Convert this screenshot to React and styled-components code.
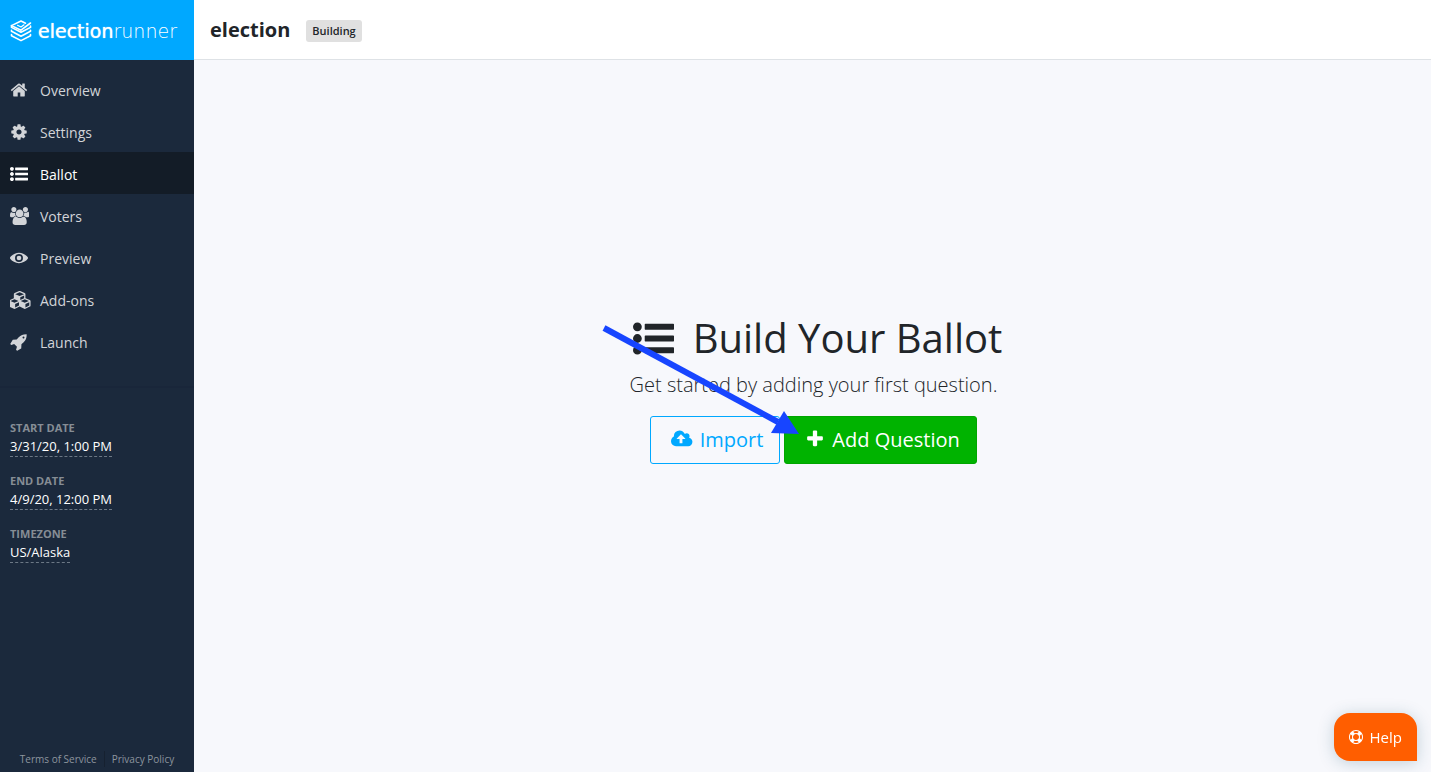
import React from 'react'
import styled, { createGlobalStyle } from 'styled-components'

// [viewBox width, path], all icons are 1792 units high
const icons = {
    home: [1792, 'M1472 992v480q0 26-19 45t-45 19h-384v-384h-256v384h-384q-26 0-45-19t-19-45v-480q0-1 .5-3t.5-3l575-474 575 474q1 2 1 6zm223-69l-62 74q-8 9-21 11h-3q-13 0-21-7l-692-577-692 577q-12 8-24 7-13-2-21-11l-62-74q-8-10-7-23.5t11-21.5l719-599q32-26 76-26t76 26l244 204v-195q0-14 9-23t23-9h192q14 0 23 9t9 23v408l219 182q10 8 11 21.5t-7 23.5z'],
    cog: [1792, 'M1152 896q0-106-75-181t-181-75-181 75-75 181 75 181 181 75 181-75 75-181zm512-109v222q0 12-8 23t-20 13l-185 28q-19 54-39 91 35 50 107 138 10 12 10 25t-9 23q-27 37-99 108t-94 71q-12 0-26-9l-138-108q-44 23-91 38-16 136-29 186-7 28-36 28h-222q-14 0-24.5-8.5t-11.5-21.500l-28-184q-49-16-90-37l-141 107q-10 9-25 9-14 0-25-11-126-114-165-168-7-10-7-23 0-12 8-23 15-21 51-66.500t54-70.500q-27-50-41-99l-183-27q-13-2-21-12.500t-8-23.500v-222q0-12 8-23t19-13l186-28q14-46 39-92-40-57-107-138-10-12-10-24 0-10 9-23 26-36 98.500-107.500t94.500-71.500q13 0 26 10l138 107q44-23 91-38 16-136 29-186 7-28 36-28h222q14 0 24.500 8.500t11.500 21.500l28 184q49 16 90 37l142-107q9-9 24-9 13 0 25 10 129 119 165 170 7 8 7 22 0 12-8 23-15 21-51 66.500t-54 70.500q26 50 41 98l183 28q13 2 21 12.500t8 23.500z'],
    list: [1792, 'M384 1408q0 80-56 136t-136 56-136-56-56-136 56-136 136-56 136 56 56 136zm0-512q0 80-56 136t-136 56-136-56-56-136 56-136 136-56 136 56 56 136zm1408 416v192q0 13-9.500 22.500t-22.500 9.500h-1216q-13 0-22.500-9.500t-9.500-22.500v-192q0-13 9.500-22.500t22.500-9.500h1216q13 0 22.500 9.500t9.500 22.500zm-1408-928q0 80-56 136t-136 56-136-56-56-136 56-136 136-56 136 56 56 136zm1408 416v192q0 13-9.500 22.500t-22.500 9.500h-1216q-13 0-22.500-9.500t-9.500-22.500v-192q0-13 9.500-22.500t22.500-9.500h1216q13 0 22.500 9.500t9.500 22.500zm0-512v192q0 13-9.500 22.500t-22.500 9.500h-1216q-13 0-22.500-9.500t-9.500-22.500v-192q0-13 9.500-22.500t22.500-9.500h1216q13 0 22.500 9.500t9.500 22.500z'],
    users: [1920, 'M593 896q-162 5-265 128h-134q-82 0-138-40.500t-56-118.500q0-353 124-353 6 0 43.500 21t97.500 42.500 119 21.500q67 0 133-23-5 37-5 66 0 159 93 293zm1071 637q0 120-73 189.500t-194 69.500h-874q-121 0-194-69.500t-73-189.500q0-53 3.500-103.500t14-109 26.500-108.500 43-97.500 62-81 85.500-53.500 111.500-20q10 0 43 21.500t73 48 107 48 135 21.500 135-21.500 107-48 73-48 43-21.500q61 0 111.500 20t85.500 53.500 62 81 43 97.500 26.500 108.500 14 109 3.500 103.500zm-1024-1277q0 106-75 181t-181 75-181-75-75-181 75-181 181-75 181 75 75 181zm704 384q0 159-112.500 271.500t-271.500 112.500-271.500-112.500-112.500-271.500 112.500-271.500 271.500-112.500 271.500 112.500 112.500 271.500zm576 225q0 78-56 118.500t-138 40.500h-134q-103-123-265-128 93-134 93-293 0-29-5-66 66 23 133 23 59 0 119-21.500t97.500-42.500 43.500-21q124 0 124 353zm-128-609q0 106-75 181t-181 75-181-75-75-181 75-181 181-75 181 75 75 181z'],
    eye: [1792, 'M896 384C540 384 190 590 20 827Q-20 896 20 965C190 1202 540 1408 896 1408S1602 1202 1772 965Q1812 896 1772 827C1602 590 1252 384 896 384zM896 500a396 396 0 1 1 0 792 396 396 0 0 1 0-792zM896 665a231 231 0 1 0 0 462 231 231 0 0 0 0-462z'],
    cubes: [2304, 'M512 1632l384-192v-314l-384 164v342zm-64-454l404-173-404-173-404 173zm1088 454l384-192v-314l-384 164v342zm-64-454l404-173-404-173-404 173zm-448-293l384-165v-266l-384 164v267zm-64-379l441-189-441-189-441 189zm1088 518v416q0 36-19 67t-52 47l-448 224q-25 14-57 14t-57-14l-448-224q-5-2-7-4-2 2-7 4l-448 224q-25 14-57 14t-57-14l-448-224q-33-16-52-47t-19-67v-416q0-38 21.500-70t56.500-48l434-186v-400q0-38 21.500-70t56.500-48l448-192q23-10 50-10t50 10l448 192q35 16 56.500 48t21.500 70v400l434 186q36 16 57 48t21 70z'],
    rocket: [1792, 'M1440 448q0-40-28-68t-68-28-68 28-28 68 28 68 68 28 68-28 28-68zm224-288q0 249-75.500 430.500t-253.500 360.500q-81 80-195 176l-20 379q-2 16-16 26l-384 224q-7 4-16 4-12 0-23-9l-64-64q-13-14-8-32l85-276-281-281-276 85q-3 1-9 1-14 0-23-9l-64-64q-17-19-5-39l224-384q10-14 26-16l379-20q96-114 176-195 188-187 358-258t431-71q14 0 24 9.500t10 22.500z'],
    cloud: [1920, 'M1280 864q0-14-9-23l-352-352q-9-9-23-9t-23 9l-351 351q-10 12-10 24 0 14 9 23t23 9h224v352q0 13 9.500 22.500t22.500 9.500h192q13 0 22.500-9.500t9.500-22.500v-352h224q13 0 22.500-9.500t9.500-22.500zm640 288q0 159-112.500 271.500t-271.500 112.500h-1088q-185 0-316.500-131.500t-131.500-316.500q0-130 70-240t188-165q-2-30-2-43 0-212 150-362t362-150q156 0 285.500 87t188.500 231q71-62 166-62 106 0 181 75t75 181q0 76-41 138 130 31 213.500 135.500t83.500 238.500z'],
    plus: [1792, 'M1600 736v192q0 40-28 68t-68 28h-416v416q0 40-28 68t-68 28h-192q-40 0-68-28t-28-68v-416h-416q-40 0-68-28t-28-68v-192q0-40 28-68t68-28h416v-416q0-40 28-68t68-28h192q40 0 68 28t28 68v416h416q40 0 68 28t28 68z'],
    ring: [1792, 'M896 0q182 0 348 71t286 191 191 286 71 348-71 348-191 286-286 191-348 71-348-71-286-191-191-286-71-348 71-348 191-286 286-191 348-71zm0 128q-190 0-361 90l194 194q82-28 167-28t167 28l194-194q-171-90-361-90zm-678 1129l194-194q-28-82-28-167t28-167l-194-194q-90 171-90 361t90 361zm678 407q190 0 361-90l-194-194q-82 28-167 28t-167-28l-194 194q171 90 361 90zm0-384q159 0 271.500-112.500t112.500-271.500-112.500-271.500-271.500-112.500-271.500 112.500-112.500 271.500 112.500 271.500 271.500 112.500zm484-217l194 194q90-171 90-361t-90-361l-194 194q28 82 28 167t-28 167z'],
}

const Icon = ({ name, size }) => {
    const [width, path] = icons[name]
    return (
        <svg width={width / 1792 * size} height={size} viewBox={`0 0 ${width} 1792`} fill="currentColor" aria-hidden="true">
            <path d={path} fillRule={name === 'eye' ? 'evenodd' : 'nonzero'} />
        </svg>
    )
}

const navItems = [
    { icon: 'home', label: 'Overview' },
    { icon: 'cog', label: 'Settings' },
    { icon: 'list', label: 'Ballot', active: true },
    { icon: 'users', label: 'Voters' },
    { icon: 'eye', label: 'Preview' },
    { icon: 'cubes', label: 'Add-ons' },
    { icon: 'rocket', label: 'Launch' },
]

const details = [
    ['Start Date', '3/31/20, 1:00 PM'],
    ['End Date', '4/9/20, 12:00 PM'],
    ['Timezone', 'US/Alaska'],
]

const LogoMark = () => (
    <svg width="22" height="22" viewBox="0 0 22 22" fill="none" stroke="white" strokeWidth="1.6" strokeLinejoin="round" strokeLinecap="round" aria-hidden="true">
        <path d="M15.500 3.200L11 1 1.500 5.600 11 10.200 20.500 3" />
        <path d="M7.500 5.300L11 7 14 4.800" strokeWidth="1.200" />
        <path d="M1.500 5.600V7.400L11 12.300 20.500 7.400V6" />
        <path d="M1.500 10.200V11.300L11 16.200 20.500 11.300V10.200" />
        <path d="M1.500 14.500V15.700L11 20.600 20.500 15.700V14.500" />
    </svg>
)

const App = () => {
    return (
        <Page>
            <GlobalStyle />
            <Sidebar>
                <Brand href="#">
                    <LogoMark />
                    <Wordmark><strong>election</strong>runner</Wordmark>
                </Brand>
                <Nav>
                    {navItems.map((item) => (
                        <NavLink href="#" key={item.label} $active={item.active}>
                            <NavIcon><Icon name={item.icon} size={18} /></NavIcon>
                            {item.label}
                        </NavLink>
                    ))}
                </Nav>
                <Details>
                    {details.map(([label, value]) => (
                        <div key={label}>
                            <dt>{label}</dt>
                            <dd><span>{value}</span></dd>
                        </div>
                    ))}
                </Details>
                <Legal>
                    <a href="#">Terms of Service</a>
                    <a href="#">Privacy Policy</a>
                </Legal>
            </Sidebar>

            <Content>
                <Header>
                    <Title>election</Title>
                    <Badge>Building</Badge>
                </Header>
                <Main>
                    <Hero>
                        <Heading><Icon name="list" size={41} />Build Your Ballot</Heading>
                        <Lead>Get started by adding your first question.</Lead>
                        <Buttons>
                            <Button><Icon name="cloud" size={20} />Import</Button>
                            <Button $primary><Icon name="plus" size={20} />Add Question</Button>
                        </Buttons>
                        <Arrow viewBox="0 0 200 112" aria-hidden="true">
                            <path d="M3 4L177 98" stroke="#1745ff" strokeWidth="6" />
                            <path d="M183 87L198 110 170 109z" fill="#1745ff" />
                        </Arrow>
                    </Hero>
                </Main>
            </Content>

            <HelpButton><Icon name="ring" size={14} />Help</HelpButton>
        </Page>
    )
}

export default App

const GlobalStyle = createGlobalStyle`
*{
    box-sizing:border-box;
}

body{
    margin:0;
    font-family:"Open Sans", sans-serif;
    font-size:16px;
    line-height:24px;
    color:#212529;
    background-color:#f7f8fc;
}

a{
    text-decoration:none;
}
`

const Page = styled.div`
display:flex;
min-height:100vh;
`

const Sidebar = styled.aside`
display:flex;
flex-direction:column;
flex:0 0 194px;
background-color:#1b293c;
`

const Brand = styled.a`
display:flex;
align-items:center;
gap:6px;
height:60px;
padding:2px 10px 0;
color:white;
background-color:#00a8ff;
`

const Wordmark = styled.span`
font-family:"DejaVu Sans", sans-serif;
font-size:19px;
font-weight:200;

strong{
    font-weight:400;
    text-shadow:0 0 1px white;
}
`

const Nav = styled.nav`
padding:8px 0 24px;
border-bottom:2px solid #19263a;
`

const NavLink = styled.a`
display:flex;
align-items:center;
height:42px;
padding:4px 10px 0;
font-size:14px;
font-weight:500;
color:${(props) => props.$active ? 'white' : '#d2d4d8'};
background-color:${(props) => props.$active ? '#131c27' : 'transparent'};
`

const NavIcon = styled.span`
display:flex;
width:30px;
padding-bottom:2px;
`

const Details = styled.dl`
display:flex;
flex-direction:column;
gap:16px;
margin:0;
padding:32px 10px;

dt{
    font-size:11px;
    line-height:16px;
    font-weight:700;
    text-transform:uppercase;
    color:#868d95;
}

dd{
    margin:0;
    font-size:13px;
    line-height:20px;
    font-weight:500;
    color:white;
}

span{
    display:inline-block;
    border-bottom:1px dashed #6c7885;
}
`

const Legal = styled.div`
display:flex;
justify-content:center;
margin-top:auto;
padding-bottom:5px;
font-size:10px;
line-height:16px;

a{
    padding:0 7px;
    color:#8d959e;
}

a + a{
    border-left:1px solid #162130;
}
`

const Content = styled.div`
display:flex;
flex-direction:column;
flex:1;
`

const Header = styled.header`
display:flex;
align-items:center;
gap:16px;
height:60px;
padding:0 16px;
background-color:white;
border-bottom:1px solid #dee2e6;
`

const Title = styled.h1`
margin:0;
font-size:20px;
line-height:24px;
font-weight:700;
`

const Badge = styled.span`
padding:0 6px;
margin-top:2px;
font-size:11px;
line-height:22px;
font-weight:600;
border-radius:3px;
background-color:#e0e0e0;
`

const Main = styled.main`
display:flex;
flex:1;
align-items:center;
justify-content:center;
padding:0 0 54px 2px;
`

const Hero = styled.div`
position:relative;
display:flex;
flex-direction:column;
align-items:center;
`

const Heading = styled.h2`
display:flex;
align-items:center;
gap:19px;
margin:0 0 8px;
padding-left:8px;
font-size:40px;
line-height:48px;
font-weight:400;
`

const Lead = styled.p`
margin:0 0 16px;
font-size:20px;
line-height:30px;
font-weight:300;
`

const Buttons = styled.div`
display:flex;
gap:4px;
`

const Button = styled.button`
display:flex;
align-items:center;
gap:7px;
height:48px;
padding:0 16px 2px 20px;
font-family:inherit;
font-size:20px;
color:${(props) => props.$primary ? 'white' : '#00a8ff'};
background-color:${(props) => props.$primary ? '#00b300' : 'transparent'};
border:1px solid ${(props) => props.$primary ? '#00a600' : '#00a8ff'};
border-radius:3px;
cursor:pointer;
`

const Arrow = styled.svg`
position:absolute;
left:-24px;
top:10px;
width:200px;
height:112px;
overflow:visible;
pointer-events:none;
`

const HelpButton = styled.button`
position:fixed;
right:14px;
bottom:11px;
display:flex;
align-items:center;
gap:7px;
height:48px;
padding:0 15px;
font-family:inherit;
font-size:15px;
font-weight:500;
color:white;
background-color:#ff5e00;
border:none;
border-radius:16px 16px 0 16px;
box-shadow:0 2px 16px rgba(40, 90, 110, 0.25);
cursor:pointer;
`
